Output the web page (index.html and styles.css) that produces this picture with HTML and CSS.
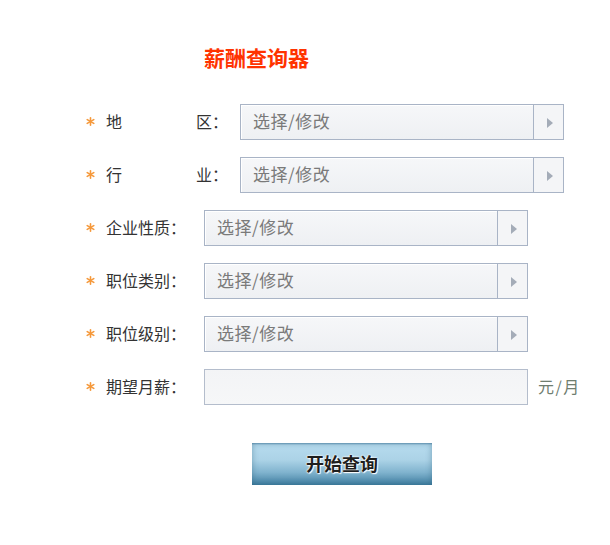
FILE: index.html
```html
<!DOCTYPE html>
<html lang="zh-CN">
<head>
<meta charset="utf-8">
<title>薪酬查询器</title>
<link rel="stylesheet" href="styles.css">
</head>
<body>
<div class="page">
  <h1 class="title">薪酬查询器</h1>
  <div class="form">
    <div class="row">
      <span class="star"><svg width="9" height="9" viewBox="0 0 9 9"><g stroke="#f5983a" stroke-width="1.6" stroke-linecap="round"><line x1="4.5" y1="0.8" x2="4.5" y2="8.2"/><line x1="1.2" y1="2.6" x2="7.8" y2="6.4"/><line x1="1.2" y1="6.4" x2="7.8" y2="2.6"/></g></svg></span>
      <span class="label label-wide"><span>地</span><span>区：</span></span>
      <div class="select"><span class="value">选择/修改</span><span class="arrow"></span></div>
    </div>
    <div class="row">
      <span class="star"><svg width="9" height="9" viewBox="0 0 9 9"><g stroke="#f5983a" stroke-width="1.6" stroke-linecap="round"><line x1="4.5" y1="0.8" x2="4.5" y2="8.2"/><line x1="1.2" y1="2.6" x2="7.8" y2="6.4"/><line x1="1.2" y1="6.4" x2="7.8" y2="2.6"/></g></svg></span>
      <span class="label label-wide"><span>行</span><span>业：</span></span>
      <div class="select"><span class="value">选择/修改</span><span class="arrow"></span></div>
    </div>
    <div class="row">
      <span class="star"><svg width="9" height="9" viewBox="0 0 9 9"><g stroke="#f5983a" stroke-width="1.6" stroke-linecap="round"><line x1="4.5" y1="0.8" x2="4.5" y2="8.2"/><line x1="1.2" y1="2.6" x2="7.8" y2="6.4"/><line x1="1.2" y1="6.4" x2="7.8" y2="2.6"/></g></svg></span>
      <span class="label">企业性质：</span>
      <div class="select"><span class="value">选择/修改</span><span class="arrow"></span></div>
    </div>
    <div class="row">
      <span class="star"><svg width="9" height="9" viewBox="0 0 9 9"><g stroke="#f5983a" stroke-width="1.6" stroke-linecap="round"><line x1="4.5" y1="0.8" x2="4.5" y2="8.2"/><line x1="1.2" y1="2.6" x2="7.8" y2="6.4"/><line x1="1.2" y1="6.4" x2="7.8" y2="2.6"/></g></svg></span>
      <span class="label">职位类别：</span>
      <div class="select"><span class="value">选择/修改</span><span class="arrow"></span></div>
    </div>
    <div class="row">
      <span class="star"><svg width="9" height="9" viewBox="0 0 9 9"><g stroke="#f5983a" stroke-width="1.6" stroke-linecap="round"><line x1="4.5" y1="0.8" x2="4.5" y2="8.2"/><line x1="1.2" y1="2.6" x2="7.8" y2="6.4"/><line x1="1.2" y1="6.4" x2="7.8" y2="2.6"/></g></svg></span>
      <span class="label">职位级别：</span>
      <div class="select"><span class="value">选择/修改</span><span class="arrow"></span></div>
    </div>
    <div class="row">
      <span class="star"><svg width="9" height="9" viewBox="0 0 9 9"><g stroke="#f5983a" stroke-width="1.6" stroke-linecap="round"><line x1="4.5" y1="0.8" x2="4.5" y2="8.2"/><line x1="1.2" y1="2.6" x2="7.8" y2="6.4"/><line x1="1.2" y1="6.4" x2="7.8" y2="2.6"/></g></svg></span>
      <span class="label">期望月薪：</span>
      <div class="input"></div>
      <span class="unit">元/月</span>
    </div>
  </div>
  <div class="button">开始查询</div>
</div>
</body>
</html>
```
FILE: styles.css
```css
html, body {
  margin: 0;
  padding: 0;
  background: #ffffff;
}
body {
  font-family: "Noto Sans CJK SC", "Liberation Sans", sans-serif;
}
.page {
  padding: 45px 0 0 86px;
}
.title {
  margin: 0 0 0 118px;
  font-size: 21px;
  line-height: 25px;
  font-weight: bold;
  color: #ff3300;
}
.form {
  margin-top: 34px;
}
.row {
  display: flex;
  align-items: center;
  height: 36px;
  margin-bottom: 17px;
}
.star {
  width: 20px;
  display: flex;
  align-items: center;
  padding-bottom: 2px;
}
.star svg {
  display: block;
}
.label {
  width: 80px;
  margin-right: 18px;
  padding-bottom: 3px;
  font-size: 16px;
  line-height: 20px;
  color: #333333;
  white-space: nowrap;
}
.label-wide {
  width: 122px;
  margin-right: 12px;
  display: flex;
  justify-content: space-between;
}
.select {
  box-sizing: border-box;
  width: 324px;
  height: 36px;
  border: 1px solid #a9b4c6;
  background: linear-gradient(to bottom, #f6f7f9, #eef0f3);
  box-shadow: inset 1px 1px 0 #ffffff;
  display: flex;
  align-items: center;
}
.value {
  flex: 1;
  padding-left: 12px;
  padding-bottom: 2px;
  font-size: 17px;
  line-height: 20px;
  letter-spacing: 0.5px;
  color: #7a7a7a;
}
.arrow {
  box-sizing: border-box;
  width: 30px;
  height: 100%;
  border-left: 1px solid #a9b4c6;
  background: #f4f5f7;
  display: flex;
  align-items: center;
  justify-content: center;
}
.arrow::before {
  content: "";
  width: 0;
  height: 0;
  border-top: 5px solid transparent;
  border-bottom: 5px solid transparent;
  border-left: 6px solid #a4acb8;
  margin-left: 2px;
  margin-top: 1px;
}
.input {
  box-sizing: border-box;
  width: 324px;
  height: 36px;
  border: 1px solid #b4bdcc;
  background: linear-gradient(to bottom, #f3f4f6, #f6f7f8);
}
.unit {
  margin-left: 10px;
  padding-bottom: 3px;
  font-size: 16px;
  letter-spacing: 1.5px;
  color: #6f7d6f;
}
.button {
  margin: 38px 0 0 166px;
  width: 180px;
  height: 42px;
  line-height: 40px;
  text-align: center;
  font-size: 18px;
  font-weight: bold;
  color: #1e1e1e;
  background: linear-gradient(to bottom, #6f9fbe 0, #b6dbee 2px, #acd3e7 40%, #80b3ce 70%, #3f7ea0 100%);
  box-shadow: inset 0 0 6px rgba(40, 90, 120, 0.45);
  text-shadow: 0 0 2px #ffffff, 0 0 2px #ffffff, 1px 1px 1px #ffffff;
}
```
